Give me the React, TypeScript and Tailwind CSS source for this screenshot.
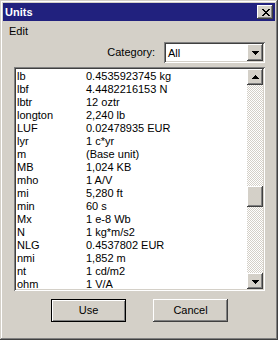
import React from "react";

const rows: [string, string][] = [
  ["lb", "0.4535923745 kg"],
  ["lbf", "4.4482216153 N"],
  ["lbtr", "12 oztr"],
  ["longton", "2,240 lb"],
  ["LUF", "0.02478935 EUR"],
  ["lyr", "1 c*yr"],
  ["m", "(Base unit)"],
  ["MB", "1,024 KB"],
  ["mho", "1 A/V"],
  ["mi", "5,280 ft"],
  ["min", "60 s"],
  ["Mx", "1 e-8 Wb"],
  ["N", "1 kg*m/s2"],
  ["NLG", "0.4537802 EUR"],
  ["nmi", "1,852 m"],
  ["nt", "1 cd/m2"],
  ["ohm", "1 V/A"],
];

const raised =
  "bg-[#d4d0c8] shadow-[inset_-1px_-1px_0_#404040,inset_1px_1px_0_#fff,inset_-2px_-2px_0_#808080]";

function CloseGlyph() {
  const px: [number, number][] = [
    [0, 0], [1, 0], [6, 0], [7, 0],
    [1, 1], [2, 1], [5, 1], [6, 1],
    [2, 2], [3, 2], [4, 2], [5, 2],
    [3, 3], [4, 3],
    [2, 4], [3, 4], [4, 4], [5, 4],
    [1, 5], [2, 5], [5, 5], [6, 5],
    [0, 6], [1, 6], [6, 6], [7, 6],
  ];
  return (
    <svg width="8" height="7" viewBox="0 0 8 7" shapeRendering="crispEdges">
      {px.map(([x, y]) => (
        <rect key={`${x}-${y}`} x={x} y={y} width="1" height="1" fill="#000" />
      ))}
    </svg>
  );
}

function Arrow({ up }: { up?: boolean }) {
  return (
    <svg width="7" height="4" viewBox="0 0 7 4" shapeRendering="crispEdges">
      {up ? (
        <>
          <rect x="3" y="0" width="1" height="1" fill="#000" />
          <rect x="2" y="1" width="3" height="1" fill="#000" />
          <rect x="1" y="2" width="5" height="1" fill="#000" />
          <rect x="0" y="3" width="7" height="1" fill="#000" />
        </>
      ) : (
        <>
          <rect x="0" y="0" width="7" height="1" fill="#000" />
          <rect x="1" y="1" width="5" height="1" fill="#000" />
          <rect x="2" y="2" width="3" height="1" fill="#000" />
          <rect x="3" y="3" width="1" height="1" fill="#000" />
        </>
      )}
    </svg>
  );
}

export default function App() {
  return (
    <div className="w-[278px] h-[340px] bg-[#d4d0c8] shadow-[inset_-1px_-1px_0_#404040,inset_1px_1px_0_#d4d0c8,inset_-2px_-2px_0_#808080,inset_2px_2px_0_#fff] p-[3px] flex flex-col font-['Liberation_Sans',Arial,sans-serif] text-[11px] leading-[13px] text-black">
      {/* Title bar */}
      <div className="h-[18px] bg-[#21217e] flex items-center justify-between pl-[2px] pr-[2px]">
        <span className="text-white font-bold text-[11px] leading-[13px]">Units</span>
        <div className={`w-[16px] h-[14px] flex items-center justify-center pl-[1px] ${raised}`}>
          <CloseGlyph />
        </div>
      </div>

      {/* Menu */}
      <div className="h-[19px] pt-[4px] pl-[6px]">
        <span>Edit</span>
      </div>

      {/* Category */}
      <div className="mt-[2px] h-[21px] flex items-center justify-end pr-[10px] gap-[9px]">
        <span>Category:</span>
        <div className="w-[101px] h-[21px] p-[2px] bg-white flex shadow-[inset_1px_1px_0_#808080,inset_-1px_-1px_0_#fff,inset_2px_2px_0_#404040,inset_-2px_-2px_0_#d4d0c8]">
          <div className="flex-1 flex items-center pl-[2px] pt-[1px]">All</div>
          <div className={`w-[16px] h-[17px] flex items-center justify-center ${raised}`}>
            <Arrow />
          </div>
        </div>
      </div>

      {/* List */}
      <div className="mt-[4px] ml-[11px] w-[251px] h-[224px] p-[2px] bg-white flex shadow-[inset_1px_1px_0_#808080,inset_-1px_-1px_0_#fff,inset_2px_2px_0_#404040,inset_-2px_-2px_0_#d4d0c8]">
        <div className="flex-1 overflow-hidden pt-[1px] pl-[1px] bg-white">
          {rows.map(([n, v]) => (
            <div key={n} className="flex h-[13px] whitespace-nowrap">
              <span className="w-[69px] shrink-0">{n}</span>
              <span>{v}</span>
            </div>
          ))}
        </div>
        <div className="w-[16px] flex flex-col">
          <div className={`h-[16px] flex items-center justify-center ${raised}`}>
            <Arrow up />
          </div>
          <div className="flex-1 flex flex-col bg-[conic-gradient(#fff_25%,#d4d0c8_0_50%,#fff_0_75%,#d4d0c8_0)] bg-[length:2px_2px]">
            <div className="h-[101px]" />
            <div className={`h-[21px] ${raised}`} />
          </div>
          <div className={`h-[16px] flex items-center justify-center pt-[1px] ${raised}`}>
            <Arrow />
          </div>
        </div>
      </div>

      {/* Buttons */}
      <div className="mt-[8px] pl-[48px] flex gap-[27px]">
        <div className="w-[75px] h-[23px] border border-black bg-[#d4d0c8] shadow-[inset_1px_1px_0_#fff,inset_-1px_-1px_0_#808080] flex items-center justify-center">
          Use
        </div>
        <div className={`w-[75px] h-[23px] flex items-center justify-center ${raised}`}>
          Cancel
        </div>
      </div>
    </div>
  );
}
